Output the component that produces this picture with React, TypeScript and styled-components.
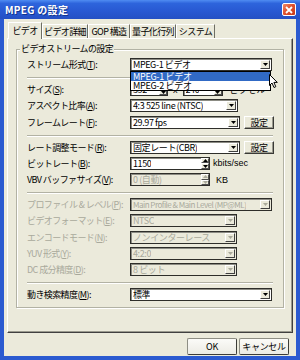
import React from "react";
import styled, { createGlobalStyle } from "styled-components";

const BEIGE = "#EBEADB";
const DIS = "#a9a99b";

const GlobalStyle = createGlobalStyle`
  html, body { margin: 0; padding: 0; }
  body {
    width: 300px; height: 360px; overflow: hidden; background: #fff;
    font-family: "Noto Sans CJK JP", "Liberation Sans", sans-serif;
  }
  * { box-sizing: border-box; }
`;

const Window = styled.div`
  width: 300px;
  height: 360px;
  display: flex;
  flex-direction: column;
  background: #2b5ad0;
`;

const TitleBar = styled.div`
  height: 19px;
  flex: none;
  display: flex;
  align-items: center;
  justify-content: space-between;
  padding: 0 4px 0 5px;
  background: linear-gradient(to bottom, #4f8cf2 0%, #2d64dc 18%, #2858d2 60%, #2450c4 100%);
`;

const Title = styled.span`
  color: #fff;
  font-weight: bold;
  font-size: 10px;
  line-height: 12px;
  letter-spacing: 0.3px;
  text-shadow: 1px 1px 0 #12358f;
`;

const CloseBtn = styled.div`
  width: 14px;
  height: 13px;
  border: 1px solid #fff;
  border-radius: 2px;
  background: linear-gradient(135deg, #f08a68 0%, #e0532f 45%, #c83818 100%);
  display: flex;
  align-items: center;
  justify-content: center;
`;

const Body = styled.div`
  flex: 1;
  margin: 0 4px 4px;
  background: ${BEIGE};
  display: flex;
  flex-direction: column;
  padding: 3px 3px 1px;
  font-size: 9px;
  color: #000;
`;

const TabStrip = styled.div`
  display: flex;
  align-items: flex-end;
  height: 16px;
  padding-left: 1px;
  position: relative;
  z-index: 1;
`;

const Tab = styled.div<{ $w: number; $active?: boolean }>`
  width: ${(p) => p.$w}px;
  height: ${(p) => (p.$active ? 17 : 14)}px;
  margin-bottom: ${(p) => (p.$active ? -1 : 0)}px;
  border: 1px solid;
  border-color: #fff #6e6e64 transparent #fff;
  border-bottom: none;
  background: ${BEIGE};
  display: flex;
  align-items: center;
  justify-content: center;
  font-size: 9px;
  letter-spacing: -0.6px;
  white-space: nowrap;
  padding-bottom: ${(p) => (p.$active ? 2 : 0)}px;
`;

const Panel = styled.div`
  flex: 1;
  border: 1px solid;
  border-color: #fff #404040 #404040 #fff;
  box-shadow: inset -1px -1px 0 #9a9a8e;
  padding: 10px 8px;
`;

const Group = styled.div`
  position: relative;
  border: 1px solid #b2b2a4;
  box-shadow: 1px 1px 0 #fff, inset 1px 1px 0 #fff;
  padding: 8px 10px 6px 10px;
  display: flex;
  flex-direction: column;
`;

const Legend = styled.span`
  position: absolute;
  top: -7px;
  left: 3px;
  padding: 0 1px;
  background: ${BEIGE};
  font-size: 9px;
  line-height: 12px;
  letter-spacing: -0.6px;
  white-space: nowrap;
`;

const Section = styled.div`
  display: flex;
  flex-direction: column;
  gap: 3.25px;
`;

const Separator = styled.div`
  height: 2px;
  margin: 6px 0 4px;
  border-top: 1px solid #b2b2a4;
  border-bottom: 1px solid #fff;
`;

const Row = styled.div<{ $disabled?: boolean }>`
  display: grid;
  grid-template-columns: 103px auto;
  align-items: center;
  height: 13px;
  color: ${(p) => (p.$disabled ? DIS : "#000")};
`;

const Label = styled.span`
  font-size: 9px;
  line-height: 11px;
  white-space: nowrap;
  letter-spacing: -0.6px;
`;

const Controls = styled.div<{ $gap?: number }>`
  display: flex;
  align-items: center;
  gap: ${(p) => p.$gap ?? 4}px;
  height: 13px;
`;

const Select = styled.div<{ $w: number; $disabled?: boolean }>`
  position: relative;
  width: ${(p) => p.$w}px;
  height: 13px;
  border: 1px solid #2e2e2a;
  box-shadow: inset 1px 1px 0 #8c8c84;
  background: ${(p) => (p.$disabled ? BEIGE : "#fff")};
  color: ${(p) => (p.$disabled ? DIS : "#000")};
  display: flex;
  align-items: center;
  justify-content: space-between;
  padding-left: 2px;
  font-size: 9px;
  white-space: nowrap;
`;

const SelText = styled.span<{ $tight?: boolean }>`
  overflow: hidden;
  line-height: 11px;
  font-size: ${(p) => (p.$tight ? 8 : 9)}px;
  letter-spacing: ${(p) => (p.$tight ? -0.5 : -0.4)}px;
`;

const DropBtn = styled.div`
  flex: none;
  width: 10px;
  height: 9px;
  margin-right: 1px;
  background: ${BEIGE};
  border: 1px solid;
  border-color: #fff #404040 #404040 #fff;
  display: flex;
  align-items: center;
  justify-content: center;
`;

const SpinBox = styled.div<{ $w: number; $disabled?: boolean }>`
  width: ${(p) => p.$w}px;
  height: 13px;
  border: 1px solid #2e2e2a;
  box-shadow: inset 1px 1px 0 #8c8c84;
  background: ${(p) => (p.$disabled ? BEIGE : "#fff")};
  color: ${(p) => (p.$disabled ? DIS : "#000")};
  display: flex;
  align-items: center;
  justify-content: space-between;
  padding-left: 2px;
  font-size: 9px;
  white-space: nowrap;
`;

const SpinBtns = styled.div`
  flex: none;
  width: 8px;
  height: 11px;
  display: flex;
  flex-direction: column;
`;

const SpinHalf = styled.div`
  flex: 1;
  background: ${BEIGE};
  border: 1px solid;
  border-color: #fff #505050 #505050 #fff;
  display: flex;
  align-items: center;
  justify-content: center;
`;

const SmallButton = styled.div`
  width: 30px;
  height: 13px;
  border: 1px solid;
  border-color: #fff #3a3a36 #3a3a36 #fff;
  box-shadow: inset -1px -1px 0 #9a9a8e;
  background: ${BEIGE};
  display: flex;
  align-items: center;
  justify-content: center;
  font-size: 9px;
  letter-spacing: -0.4px;
`;

const Unit = styled.span<{ $pad?: number }>`
  font-size: 9px;
  padding-left: ${(p) => p.$pad ?? 0}px;
  white-space: nowrap;
  font-family: "Liberation Sans", "Noto Sans CJK JP", sans-serif;
`;

const DropList = styled.div`
  position: absolute;
  top: calc(100% + 1px);
  left: -1px;
  width: 141px;
  background: #fff;
  border: 1px solid #000;
  z-index: 5;
  padding: 0;
  display: flex;
  flex-direction: column;
`;

const DropItem = styled.div<{ $active?: boolean }>`
  height: 9px;
  line-height: 9px;
  padding-left: 2px;
  font-size: 9px;
  letter-spacing: -0.3px;
  background: ${(p) => (p.$active ? "#316ac5" : "#fff")};
  color: ${(p) => (p.$active ? "#fff" : "#000")};
`;

const Cursor = styled.svg`
  position: absolute;
  right: -8px;
  top: 2px;
  z-index: 6;
`;

const ButtonRow = styled.div`
  display: flex;
  justify-content: flex-end;
  gap: 2px;
  margin-top: 5px;
  padding-right: 4px;
`;

const DialogButton = styled.div`
  width: 50px;
  height: 17px;
  border: 1px solid #8e8e84;
  border-right-color: #3c3c38;
  border-bottom-color: #3c3c38;
  border-radius: 2px;
  background: linear-gradient(to bottom, #fbfbf8, #ecebe4);
  display: flex;
  align-items: center;
  justify-content: center;
  font-size: 9px;
  letter-spacing: -0.3px;
`;

const Tri = ({ up, disabled }: { up?: boolean; disabled?: boolean }) => (
  <svg width="5" height="3" viewBox="0 0 5 3">
    <path d={up ? "M0 3H5L2.5 0Z" : "M0 0H5L2.5 3Z"} fill={disabled ? DIS : "#000"} />
  </svg>
);

const Combo = ({
  w,
  text,
  disabled,
  tight,
  children,
}: {
  w: number;
  text: string;
  disabled?: boolean;
  tight?: boolean;
  children?: React.ReactNode;
}) => (
  <Select $w={w} $disabled={disabled}>
    <SelText $tight={tight}>{text}</SelText>
    <DropBtn>
      <Tri disabled={disabled} />
    </DropBtn>
    {children}
  </Select>
);

const Spin = ({ w, text, disabled }: { w: number; text: string; disabled?: boolean }) => (
  <SpinBox $w={w} $disabled={disabled}>
    <SelText>{text}</SelText>
    <SpinBtns>
      <SpinHalf>
        <Tri up disabled={disabled} />
      </SpinHalf>
      <SpinHalf>
        <Tri disabled={disabled} />
      </SpinHalf>
    </SpinBtns>
  </SpinBox>
);

const L = ({ text, k }: { text: string; k: string }) => (
  <Label>
    {text}(<u>{k}</u>):
  </Label>
);

export default function App() {
  return (
    <>
      <GlobalStyle />
      <Window>
        <TitleBar>
          <Title>MPEG の設定</Title>
          <CloseBtn>
            <svg width="8" height="8" viewBox="0 0 8 8">
              <path d="M1 1L7 7M7 1L1 7" stroke="#fff" strokeWidth="1.8" />
            </svg>
          </CloseBtn>
        </TitleBar>
        <Body>
          <TabStrip>
            <Tab $w={34} $active>ビデオ</Tab>
            <Tab $w={46}>ビデオ詳細</Tab>
            <Tab $w={42}>GOP 構造</Tab>
            <Tab $w={46}>量子化行列</Tab>
            <Tab $w={39}>システム</Tab>
          </TabStrip>
          <Panel>
            <Group>
              <Legend>ビデオストリームの設定</Legend>
              <Section>
                <Row>
                  <L text="ストリーム形式" k="T" />
                  <Controls>
                    <Combo w={142} text="MPEG-1 ビデオ">
                      <DropList>
                        <DropItem $active>MPEG-1 ビデオ</DropItem>
                        <DropItem>MPEG-2 ビデオ</DropItem>
                        <Cursor width="9" height="14" viewBox="0 0 9 14">
                          <path d="M0.5 0.5V11.5L3 9L5 13.5L6.8 12.7L4.9 8.4H8.3Z" fill="#fff" stroke="#000" strokeWidth="1" />
                        </Cursor>
                      </DropList>
                    </Combo>
                  </Controls>
                </Row>
              </Section>
              <Separator />
              <Section>
                <Row>
                  <L text="サイズ" k="S" />
                  <Controls $gap={5}>
                    <Spin w={38} text="352" />
                    <Unit>x</Unit>
                    <Spin w={40} text="240" />
                    <Unit $pad={2}>ピクセル</Unit>
                  </Controls>
                </Row>
                <Row>
                  <L text="アスペクト比率" k="A" />
                  <Controls>
                    <Combo w={108} text="4:3 525 line (NTSC)" />
                  </Controls>
                </Row>
                <Row>
                  <L text="フレームレート" k="F" />
                  <Controls>
                    <Combo w={110} text="29.97 fps" />
                    <SmallButton>設定</SmallButton>
                  </Controls>
                </Row>
              </Section>
              <Separator />
              <Section>
                <Row>
                  <L text="レート調整モード" k="R" />
                  <Controls>
                    <Combo w={110} text="固定レート(CBR)" />
                    <SmallButton>設定</SmallButton>
                  </Controls>
                </Row>
                <Row>
                  <L text="ビットレート" k="B" />
                  <Controls $gap={3}>
                    <Spin w={80} text="1150" />
                    <Unit>kbits/sec</Unit>
                  </Controls>
                </Row>
                <Row>
                  <L text="VBV バッファサイズ" k="V" />
                  <Controls $gap={6}>
                    <Spin w={80} text="0 (自動)" disabled />
                    <Unit>KB</Unit>
                  </Controls>
                </Row>
              </Section>
              <Separator />
              <Section>
                <Row $disabled>
                  <L text="プロファイル & レベル" k="P" />
                  <Controls>
                    <Combo w={142} text="Main Profile & Main Level (MP@ML)" disabled tight />
                  </Controls>
                </Row>
                <Row $disabled>
                  <L text="ビデオフォーマット" k="E" />
                  <Controls>
                    <Combo w={107} text="NTSC" disabled />
                  </Controls>
                </Row>
                <Row $disabled>
                  <L text="エンコードモード" k="N" />
                  <Controls>
                    <Combo w={107} text="ノンインターレース" disabled />
                  </Controls>
                </Row>
                <Row $disabled>
                  <L text="YUV 形式" k="Y" />
                  <Controls>
                    <Combo w={107} text="4:2:0" disabled />
                  </Controls>
                </Row>
                <Row $disabled>
                  <L text="DC 成分精度" k="D" />
                  <Controls>
                    <Combo w={107} text="8 ビット" disabled />
                  </Controls>
                </Row>
              </Section>
              <Separator />
              <Section>
                <Row>
                  <L text="動き検索精度" k="M" />
                  <Controls>
                    <Combo w={142} text="標準" />
                  </Controls>
                </Row>
              </Section>
            </Group>
          </Panel>
          <ButtonRow>
            <DialogButton>OK</DialogButton>
            <DialogButton>キャンセル</DialogButton>
          </ButtonRow>
        </Body>
      </Window>
    </>
  );
}
